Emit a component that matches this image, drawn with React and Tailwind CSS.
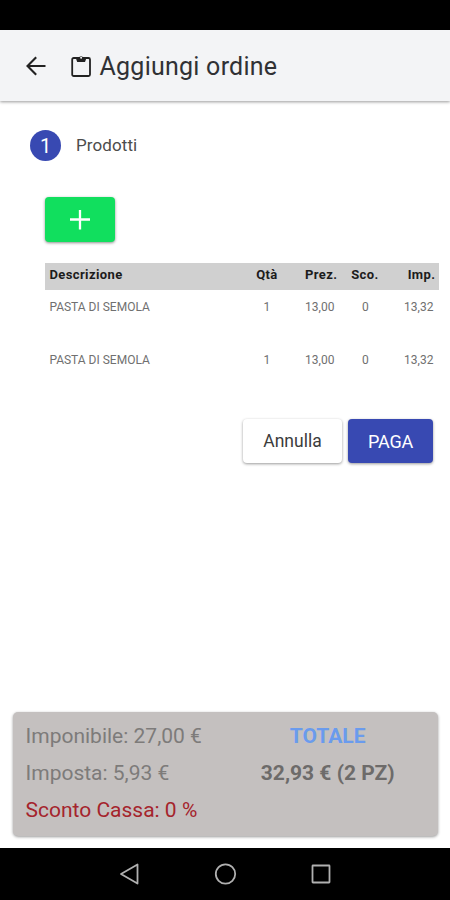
const rows = [
    { id: 1, name: "PASTA DI SEMOLA", qty: "1", price: "13,00", discount: "0", total: "13,32" },
    { id: 2, name: "PASTA DI SEMOLA", qty: "1", price: "13,00", discount: "0", total: "13,32" },
];

const columns = "grid grid-cols-[200px_42px_54px_46px_1fr]";

function ArrowIcon() {
    return (
        <svg width="20" height="20" viewBox="0 0 20 20" fill="none" stroke="currentColor" strokeWidth="2.1">
            <path d="M19.500 10H1.700M10.200 1.200 1.500 10l8.700 8.800" />
        </svg>
    );
}

function ClipboardIcon() {
    return (
        <svg width="20" height="22" viewBox="0 0 20 22" fill="none" stroke="currentColor" strokeWidth="1.8">
            <rect x="1.200" y="3" width="17.800" height="18" rx="1.500" />
            <path d="M5.200 3h2.600a2.400 2.400 0 0 1 4.600 0H15v1.200l-1 2.800H6.200l-1-2.800z" fill="currentColor" stroke="none" />
            <circle cx="10.100" cy="2.800" r="1" stroke="none" fill="#f3f4f6" />
        </svg>
    );
}

function Header() {
    return (
        <header className="h-[71px] shrink-0 flex items-center pl-[26px] bg-[#f3f4f6] text-[#222] shadow-[0_1px_3px_rgba(0,0,0,0.4)]">
            <ArrowIcon />
            <div className="ml-[24.5px]">
                <ClipboardIcon />
            </div>
            <h1 className="ml-[9px] mt-[2px] text-[25px] leading-8 tracking-[0.25px] text-[#303134]">Aggiungi ordine</h1>
        </header>
    );
}

function ProductsTable() {
    return (
        <div className="mt-[21px] w-[394px]">
            <div className={`${columns} h-[27px] pt-[3px] bg-[#d0d0d0] text-[13px] leading-[18px] font-bold tracking-[0.4px] text-[#1c1c1c]`}>
                <span className="pl-[4px]">Descrizione</span>
                <span className="text-center pl-px">Qtà</span>
                <span className="text-right pr-[4px]">Prez.</span>
                <span className="text-center pl-px">Sco.</span>
                <span className="text-right pr-[4px]">Imp.</span>
            </div>
            {rows.map((row) => (
                <div key={row.id} className={`${columns} h-[53px] pt-[8px] text-[12px] leading-[18px] text-[#707070]`}>
                    <span className="pl-[4px]">{row.name}</span>
                    <span className="text-center pl-px">{row.qty}</span>
                    <span className="text-right pr-[7px]">{row.price}</span>
                    <span className="text-center pl-[2px]">{row.discount}</span>
                    <span className="text-right pr-[6px]">{row.total}</span>
                </div>
            ))}
        </div>
    );
}

function Summary() {
    return (
        <section className="ml-[13px] mr-[12px] mb-[12px] h-[124px] shrink-0 flex rounded-[5px] bg-[#c4c0bf] pl-[12.5px] pt-[6px] text-[21px] leading-[37px] text-[#7d7b7a] shadow-[0_1px_3px_rgba(0,0,0,0.4)]">
            <div className="w-[193px]">
                <p>Imponibile: 27,00 €</p>
                <p>Imposta: 5,93 €</p>
                <p className="text-[#a5242c]">Sconto Cassa: 0 %</p>
            </div>
            <div className="w-[222px] text-center font-bold">
                <p className="text-[#6a9bed]">TOTALE</p>
                <p className="text-[#6d6b6a]">32,93 € (2 PZ)</p>
            </div>
        </section>
    );
}

function NavigationBar() {
    return (
        <nav className="h-[52px] shrink-0 bg-black">
            <svg width="450" height="52" fill="none" stroke="#b0b0b0" strokeWidth="1.8" strokeLinejoin="round">
                <path d="M137.500 16.500v19L121 26z" />
                <circle cx="225.500" cy="26" r="9.700" />
                <rect x="312.500" y="17.500" width="17" height="17" rx="0.500" />
            </svg>
        </nav>
    );
}

export default function App() {
    return (
        <div className="w-[450px] h-[900px] flex flex-col overflow-hidden bg-white font-[Roboto,sans-serif]">
            <div className="h-[30px] shrink-0 bg-black" />
            <Header />

            <main className="flex-1">
                <div className="flex items-center pt-[29px] pl-[30px]">
                    <span className="size-[31px] flex items-center justify-center rounded-full bg-[#3849b2] text-[20px] text-white">1</span>
                    <span className="ml-[15px] -mt-px text-[17px] leading-6 tracking-[0.1px] text-[#4c4c4c]">Prodotti</span>
                </div>

                <div className="mt-[36px] pl-[45.4px]">
                    <button className="w-[70px] h-[45px] flex items-center justify-center rounded-[4px] bg-[#11df5e] text-white shadow-[0_1px_3px_rgba(0,0,0,0.45)]">
                        <svg width="20" height="20" viewBox="0 0 20 20" stroke="currentColor" strokeWidth="2.300">
                            <path d="M0 9.500h20M10 -0.500v20" />
                        </svg>
                    </button>
                    <ProductsTable />
                </div>

                <div className="mt-[23px] pr-[17px] flex justify-end gap-[6px] text-[18px]">
                    <button className="w-[99px] h-[44px] rounded-[4px] bg-white text-[#3c3c3c] text-[17.5px] shadow-[0_1px_3px_rgba(0,0,0,0.4)]">Annulla</button>
                    <button className="w-[85px] h-[44px] rounded-[4px] bg-[#3849b2] text-white tracking-[-0.2px] shadow-[0_1px_3px_rgba(0,0,0,0.4)]">PAGA</button>
                </div>
            </main>

            <Summary />
            <NavigationBar />
        </div>
    );
}
